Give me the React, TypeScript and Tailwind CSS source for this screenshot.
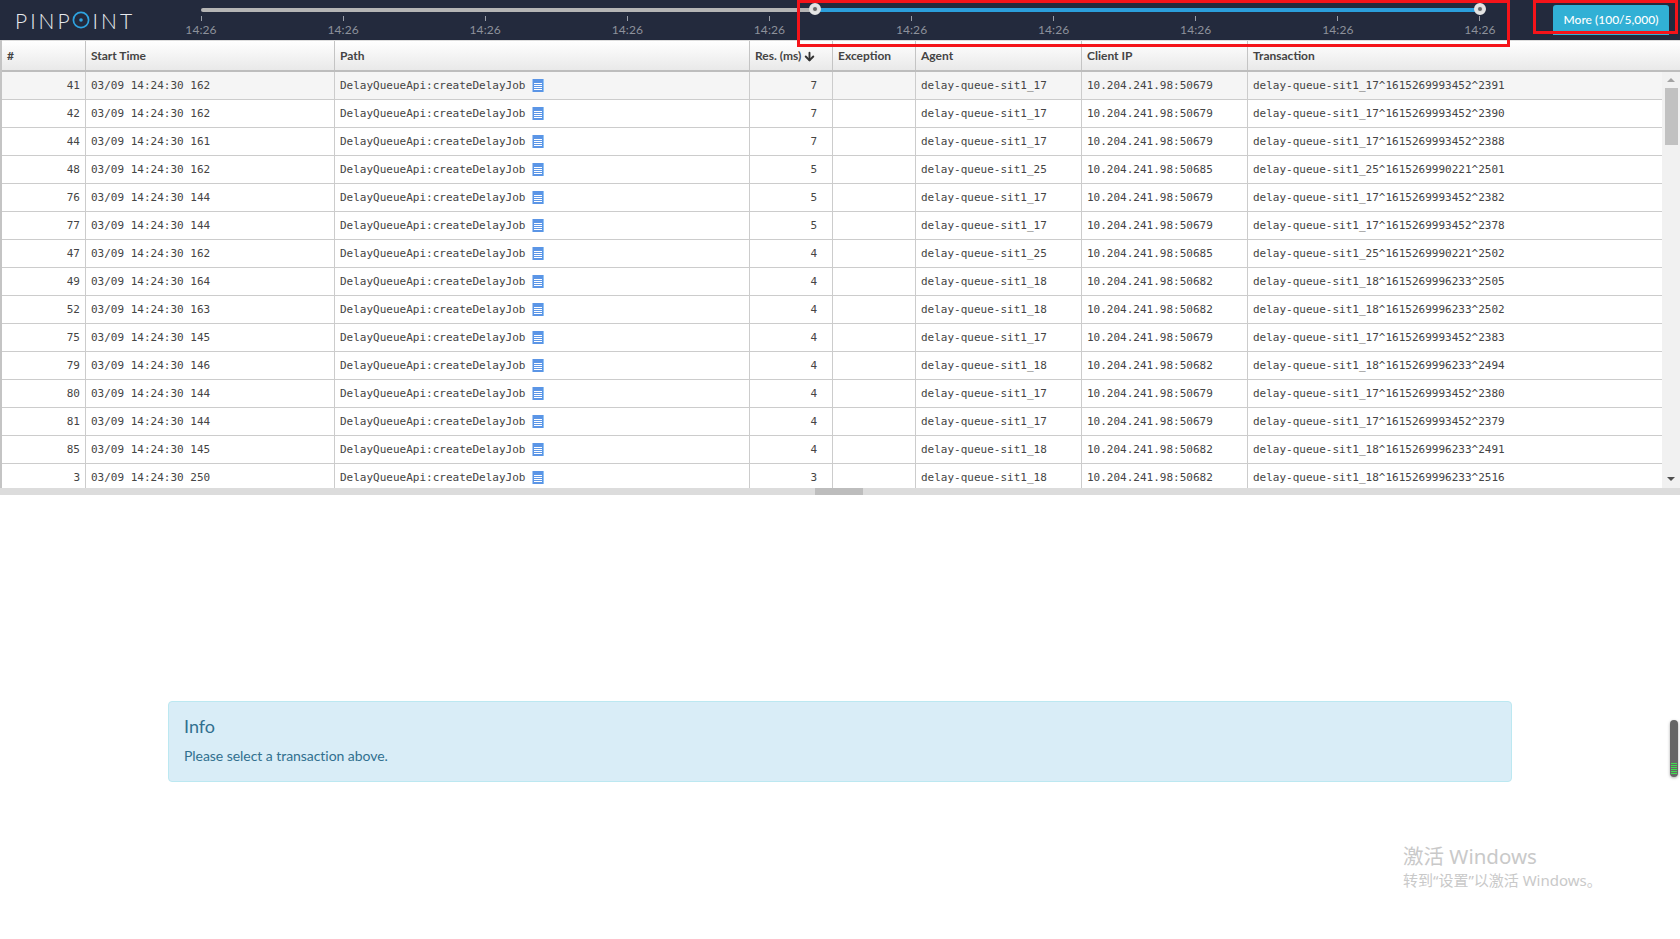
import { ArrowDown } from "lucide-react";

interface Row {
  id: number;
  ms: string;
  res: number;
  agent: string;
  port: string;
  tx: string;
}

const rows: Row[] = [
  { id: 41, ms: "162", res: 7, agent: "17", port: "50679", tx: "1615269993452^2391" },
  { id: 42, ms: "162", res: 7, agent: "17", port: "50679", tx: "1615269993452^2390" },
  { id: 44, ms: "161", res: 7, agent: "17", port: "50679", tx: "1615269993452^2388" },
  { id: 48, ms: "162", res: 5, agent: "25", port: "50685", tx: "1615269990221^2501" },
  { id: 76, ms: "144", res: 5, agent: "17", port: "50679", tx: "1615269993452^2382" },
  { id: 77, ms: "144", res: 5, agent: "17", port: "50679", tx: "1615269993452^2378" },
  { id: 47, ms: "162", res: 4, agent: "25", port: "50685", tx: "1615269990221^2502" },
  { id: 49, ms: "164", res: 4, agent: "18", port: "50682", tx: "1615269996233^2505" },
  { id: 52, ms: "163", res: 4, agent: "18", port: "50682", tx: "1615269996233^2502" },
  { id: 75, ms: "145", res: 4, agent: "17", port: "50679", tx: "1615269993452^2383" },
  { id: 79, ms: "146", res: 4, agent: "18", port: "50682", tx: "1615269996233^2494" },
  { id: 80, ms: "144", res: 4, agent: "17", port: "50679", tx: "1615269993452^2380" },
  { id: 81, ms: "144", res: 4, agent: "17", port: "50679", tx: "1615269993452^2379" },
  { id: 85, ms: "145", res: 4, agent: "18", port: "50682", tx: "1615269996233^2491" },
  { id: 3, ms: "250", res: 3, agent: "18", port: "50682", tx: "1615269996233^2516" },
];

const ticks = [0, 1, 2, 3, 4, 5, 6, 7, 8, 9];

function Logo() {
  return (
    <div className="flex items-center pl-[15px] w-[201px] text-[21px] font-light leading-none tracking-[3px] text-[#e8eaee]">
      <span>PINP</span>
      <svg width="18" height="18" viewBox="0 0 18 18" className="mr-[3px] -ml-[1px]">
        <circle cx="9" cy="9" r="7.6" fill="none" stroke="#2ea3e0" strokeWidth="1.7" />
        <circle cx="9" cy="9" r="1.8" fill="#2ea3e0" />
      </svg>
      <span>INT</span>
    </div>
  );
}

function Handle({ className }: { className: string }) {
  return (
    <div
      className={`absolute top-[3px] w-[12px] h-[12px] rounded-full bg-[#dddddd] border-[3px] border-[#e4e4e4] flex items-center justify-center ${className}`}
    >
      <div className="w-[4px] h-[4px] rounded-full bg-[#666666]" />
    </div>
  );
}

function Timeline() {
  return (
    <div className="relative w-[1279px] h-[40px]">
      <div className="absolute top-[8px] left-0 w-[614px] h-[4px] rounded-l-full bg-[#b5b5b5]" />
      <div className="absolute top-[8px] left-[614px] w-[665px] h-[4px] bg-[#2b9fdc]" />
      <Handle className="left-[608px]" />
      <Handle className="left-[1273px]" />
      <div className="flex justify-between pt-[16px]">
        {ticks.map((t) => (
          <div key={t} className="w-0 flex flex-col items-center">
            <div className="w-px h-[5px] bg-[#9a9ea8] shrink-0" />
            <span className="mt-[1px] text-[12px] leading-[16px] text-[#8d919b] tracking-[0.1px]">14:26</span>
          </div>
        ))}
      </div>
    </div>
  );
}

function ListIcon() {
  return (
    <svg width="12" height="13" viewBox="0 0 12 13" className="ml-[7px] -mt-[2px] shrink-0">
      <rect x="0" y="0" width="12" height="13" fill="#5b95e6" />
      <rect x="0" y="0" width="1" height="13" fill="#a9c8f2" />
      <rect x="11" y="0" width="1" height="13" fill="#8fc4f5" />
      <path d="M2 4.5h8M2 6.5h8M2 8.5h8M2 10.5h8" stroke="#ffffff" strokeWidth="1" />
    </svg>
  );
}

function HeaderCell({ w, children }: { w: string; children: React.ReactNode }) {
  return (
    <div className={`${w} shrink-0 h-full flex items-center pl-[5px] pt-[1px] border-r border-[#c4c4c4]`}>
      {children}
    </div>
  );
}

function Cell({ w, className, children }: { w: string; className?: string; children: React.ReactNode }) {
  return (
    <div className={`${w} shrink-0 h-full flex items-center pt-[1px] border-r border-[#cccccc] ${className ?? "pl-[5px]"}`}>
      {children}
    </div>
  );
}

export default function App() {
  return (
    <div className="relative w-[1680px] h-[939px] overflow-hidden bg-white font-['Lato','Liberation_Sans',sans-serif]">
      {/* top bar */}
      <div className="flex h-[40px] bg-[#232a3d]">
        <Logo />
        <Timeline />
        <div className="ml-[73px] pt-[5px]">
          <button className="w-[116px] h-[30px] rounded-t-[3px] bg-[#31b0d5] text-[12px] font-medium text-white">
            More (100/5,000)
          </button>
        </div>
      </div>

      {/* grid */}
      <div className="border-l-2 border-[#c4c4c4]">
        <div className="flex h-[32px] border-t border-b-2 border-t-[#dddddd] border-b-[#bdbdbd] bg-gradient-to-b from-white to-[#e9e9e9] text-[12px] font-bold text-[#444444]">
          <HeaderCell w="w-[84px]">#</HeaderCell>
          <HeaderCell w="w-[249px]">Start Time</HeaderCell>
          <HeaderCell w="w-[415px]">Path</HeaderCell>
          <HeaderCell w="w-[83px]">
            Res. (ms)
            <ArrowDown size={13} strokeWidth={3.5} className="ml-[2px] text-[#333333]" />
          </HeaderCell>
          <HeaderCell w="w-[83px]">Exception</HeaderCell>
          <HeaderCell w="w-[166px]">Agent</HeaderCell>
          <HeaderCell w="w-[166px]">Client IP</HeaderCell>
          <div className="flex items-center pl-[5px] pt-[1px]">Transaction</div>
        </div>

        <div className="flex h-[416px] overflow-hidden">
          <div className="w-[1660px] font-['DejaVu_Sans_Mono','Liberation_Mono',monospace] text-[11px] text-[#444444]">
            {rows.map((r, i) => (
              <div key={r.id} className={`flex h-[28px] border-b border-[#cccccc] ${i === 0 ? "bg-[#f5f5f5]" : "bg-white"}`}>
                <Cell w="w-[84px]" className="justify-end pr-[5px]">{r.id}</Cell>
                <Cell w="w-[249px]">03/09 14:24:30 {r.ms}</Cell>
                <Cell w="w-[415px]">
                  DelayQueueApi:createDelayJob
                  <ListIcon />
                </Cell>
                <Cell w="w-[83px]" className="justify-end pr-[15px]">{r.res}</Cell>
                <Cell w="w-[83px]"> </Cell>
                <Cell w="w-[166px]">delay-queue-sit1_{r.agent}</Cell>
                <Cell w="w-[166px]">10.204.241.98:{r.port}</Cell>
                <div className="flex items-center pl-[5px] pt-[1px]">
                  delay-queue-sit1_{r.agent}^{r.tx}
                </div>
              </div>
            ))}
          </div>
          {/* vertical scrollbar */}
          <div className="w-[18px] bg-[#f1f1f1] flex flex-col items-center justify-between">
            <div className="flex flex-col items-center w-full">
              <div className="mt-[6px] w-0 h-0 border-x-[4px] border-x-transparent border-b-[4px] border-b-[#a3a3a3]" />
              <div className="mt-[6px] w-[13px] h-[57px] bg-[#c1c1c1]" />
            </div>
            <div className="mb-[7px] w-0 h-0 border-x-[4px] border-x-transparent border-t-[4px] border-t-[#505050]" />
          </div>
        </div>
      </div>

      {/* horizontal scrollbar */}
      <div className="h-[7px] bg-[#dcdcdc] pl-[815px]">
        <div className="w-[48px] h-full bg-[#bdbdbd]" />
      </div>

      {/* info panel */}
      <div className="mt-[206px] ml-[168px] w-[1344px] h-[81px] px-[15px] pt-[14px] rounded-[4px] border border-[#bce8f1] bg-[#d9edf7] text-[#31708f]">
        <h4 className="text-[18px] leading-[20px]">Info</h4>
        <p className="mt-[10px] text-[14px] leading-[20px] tracking-[-0.05px]">Please select a transaction above.</p>
      </div>

      {/* annotation boxes */}
      <div className="absolute left-[797px] top-0 w-[713px] h-[47px] border-[3px] border-[#f5141a] pointer-events-none" />
      <div className="absolute left-[1533px] top-0 w-[145px] h-[34px] border-[3px] border-[#f5141a] pointer-events-none" />

      {/* side indicator */}
      <div className="absolute left-[1670px] top-[720px] w-[8px] h-[57px] rounded-full bg-[#666666] shadow-[0_1px_3px_#aaa] overflow-hidden">
        <div className="mt-[43px] flex flex-col gap-px px-px">
          {[0, 1, 2, 3, 4, 5].map((n) => (
            <div key={n} className="h-px bg-[#3fe04f]" />
          ))}
        </div>
      </div>

      {/* os watermark */}
      <div className="absolute left-[1403px] top-[842px] text-[#c9c9c9] font-['Noto_Sans','Noto_Sans_CJK_SC',sans-serif]">
        <div className="text-[20.5px] leading-[28px] whitespace-nowrap">激活 Windows</div>
        <div className="text-[15px] leading-[20px] whitespace-nowrap">转到“设置”以激活 Windows。</div>
      </div>
    </div>
  );
}
